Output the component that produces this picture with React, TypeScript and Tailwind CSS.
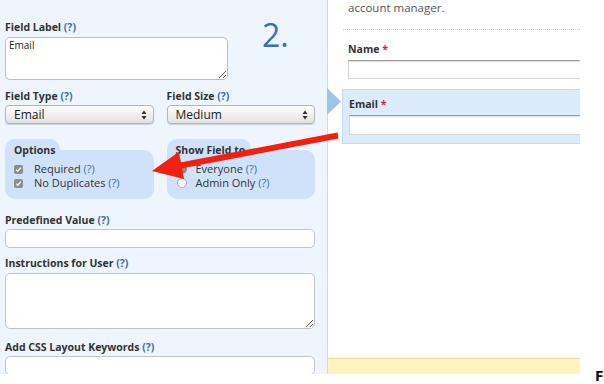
import React from "react";

const Help = () => <span className="text-[#3b6ea8]">(?)</span>;

function Label({ text, required }: { text: string; required?: boolean }) {
  return (
    <div className="h-[12px] whitespace-nowrap text-[10.5px] font-bold leading-[12px] text-[#333]">
      {text}{" "}
      {required ? <span className="text-[#e0202a]">*</span> : <Help />}
    </div>
  );
}

function SelectBox({ value }: { value: string }) {
  return (
    <div className="mt-[3px] flex h-[19px] items-center justify-between rounded-[4px] border border-[#b4b4b4] bg-gradient-to-b from-white to-[#e2e2e2] pl-[8px] pr-[6px] shadow-[0_1px_1px_rgba(0,0,0,0.15)]">
      <span className="text-[12px] leading-none text-[#222]">{value}</span>
      <svg width="6" height="10" viewBox="0 0 6 10">
        <path d="M3 0.5 L5.5 4 L0.5 4 Z" fill="#333" />
        <path d="M3 9.5 L5.5 6 L0.5 6 Z" fill="#333" />
      </svg>
    </div>
  );
}

function Check({ text }: { text: string }) {
  return (
    <div className="flex h-[14px] items-center text-[11px] leading-[14px] text-[#333]">
      <span className="ml-[9px] mr-[11px] flex h-[9px] w-[9px] items-center justify-center rounded-[2px] bg-[#8d8d8d]">
        <svg width="7" height="7" viewBox="0 0 7 7">
          <path d="M1.2 3.6 L2.8 5.2 L5.8 1.6" stroke="white" strokeWidth="1.3" fill="none" />
        </svg>
      </span>
      <span>
        {text} <Help />
      </span>
    </div>
  );
}

function Radio({ text, on }: { text: string; on?: boolean }) {
  return (
    <div className="flex h-[14px] items-center text-[11px] leading-[14px] text-[#333]">
      <span
        className={
          on
            ? "ml-[10px] mr-[9px] h-[10px] w-[10px] rounded-full bg-[#8a8a8a]"
            : "ml-[10px] mr-[9px] h-[10px] w-[10px] rounded-full border border-[#aaa] bg-white"
        }
      />
      <span>
        {text} <Help />
      </span>
    </div>
  );
}

function Group({ title, tabW, children }: { title: string; tabW: string; children: React.ReactNode }) {
  return (
    <div className="flex flex-col">
      <div className={`h-[11px] rounded-t-[10px] bg-[#cfe2fa] ${tabW}`} />
      <div className="h-[49px] rounded-[10px] rounded-tl-none bg-[#cfe2fa]">
        <div className="-mt-[6px] h-[12px] pl-[9px] text-[10.5px] font-bold leading-[12px] text-[#333]">{title}</div>
        <div className="mt-[6px]">{children}</div>
      </div>
    </div>
  );
}

export default function App() {
  return (
    <div className="relative h-[384px] w-[604px] overflow-hidden bg-white font-['Open_Sans',sans-serif]">
      <div className="flex h-[384px]">
        {/* settings panel */}
        <div className="h-[374px] w-[328px] shrink-0 overflow-hidden border-r border-[#c8dbf1] bg-[#eef5fd] pl-[5px] pr-[12px] pt-[21px]">
          <div className="flex items-start">
            <div className="w-[223px]">
              <Label text="Field Label" />
              <textarea
                defaultValue="Email"
                className="mt-[4px] block h-[43px] w-[223px] rounded-[5px] border border-[#bdbdbd] bg-white px-[3px] py-[1px] text-[10px] leading-[13px] text-[#222] outline-none"
              />
            </div>
            <div className="-mt-[2px] ml-[34px] text-[32px] leading-none text-[#3a6fb3]">2.</div>
          </div>

          <div className="mt-[10px] grid w-[310px] grid-cols-2 gap-x-[13px]">
            <div>
              <Label text="Field Type" />
              <SelectBox value="Email" />
            </div>
            <div>
              <Label text="Field Size" />
              <SelectBox value="Medium" />
            </div>
          </div>

          <div className="mt-[15px] grid w-[310px] grid-cols-2 gap-x-[13px]">
            <Group title="Options" tabW="w-[55px]">
              <Check text="Required" />
              <Check text="No Duplicates" />
            </Group>
            <Group title="Show Field to" tabW="w-[84px]">
              <Radio text="Everyone" on />
              <Radio text="Admin Only" />
            </Group>
          </div>

          <div className="mt-[15px]">
            <Label text="Predefined Value" />
            <div className="mt-[3px] h-[19px] w-[310px] rounded-[5px] border border-[#c4c4c4] bg-white" />
          </div>

          <div className="mt-[9px]">
            <Label text="Instructions for User" />
            <textarea className="mt-[4px] block h-[56px] w-[310px] rounded-[5px] border border-[#c4c4c4] bg-white outline-none" />
          </div>

          <div className="mt-[12px]">
            <Label text="Add CSS Layout Keywords" />
            <div className="mt-[3px] h-[19px] w-[310px] rounded-[5px] border border-[#c4c4c4] bg-white" />
          </div>
        </div>

        {/* form preview */}
        <div className="flex h-[374px] w-[252px] shrink-0 flex-col">
          <div className="pl-[20px] pt-[2px] text-[11.5px] leading-[12px] text-[#555]">account manager.</div>
          <div className="ml-[15px] mt-[15px] border-t border-dotted border-[#c8c8c8]" />
          <div className="pl-[20px] pt-[13px]">
            <Label text="Name" required />
            <div className="mt-[5px] h-[19px] border border-r-0 border-[#d6d6d6] border-t-[#9a9a9a] bg-white shadow-[inset_0_1px_1px_rgba(0,0,0,0.12)]" />
          </div>
          <div className="relative ml-[14px] mt-[10px] border border-r-0 border-[#c4d9f1] bg-[#dcebfc] pb-[8px] pl-[6px] pt-[8px]">
            <svg className="absolute left-[-16px] top-[-2px]" width="15" height="28" viewBox="0 0 15 28">
              <path d="M0 0 L14 13.5 L0 27 Z" fill="#9fc3ea" />
            </svg>
            <Label text="Email" required />
            <div className="mt-[5px] h-[20px] border border-r-0 border-[#d6d6d6] border-t-[#9a9a9a] bg-white shadow-[inset_0_1px_1px_rgba(0,0,0,0.12)]" />
          </div>
          <div className="mt-auto h-[16px] border-t border-[#f6df95] bg-[#fff4c0]" />
        </div>

        <div className="flex flex-1 items-end pb-[1px] pl-[15px]">
          <span className="text-[15px] font-bold leading-[15px] text-black">F</span>
        </div>
      </div>

      {/* annotation arrow */}
      <svg className="pointer-events-none absolute left-0 top-0" width="604" height="384" viewBox="0 0 604 384">
        <line x1="338" y1="135.5" x2="178" y2="166" stroke="#f2200f" strokeWidth="6" />
        <path d="M152 171 L178.9 151.7 L184.1 179.1 Z" fill="#f2200f" />
      </svg>
    </div>
  );
}
